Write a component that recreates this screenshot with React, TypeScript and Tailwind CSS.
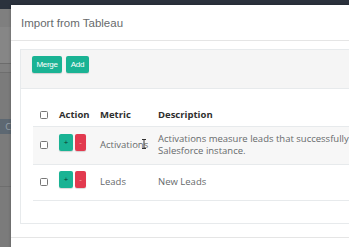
export default function App() {
  const rows = [
    {
      metric: "Activations",
      desc: "Activations measure leads that successfully leave the funnel and are created in the Salesforce instance.",
      striped: true,
    },
    { metric: "Leads", desc: "New Leads", striped: false },
  ];

  return (
    <div className="relative h-[247px] w-[349px] overflow-hidden bg-[#7b7b7b] font-['Open_Sans',sans-serif]">
      {/* dimmed page behind the dialog */}
      <div className="h-[9px] bg-[#2b323d]" />
      <div className="h-[18px] bg-[#7f7f7f]" />
      <div className="h-[37px] border-b border-[#6c6c6c] bg-[#868686]" />
      <div className="h-[9px] border-b border-[#6e6e6e] bg-[#808080]" />
      <div className="mt-[46px] flex h-[15px] w-[11px] items-center justify-end bg-[#5d6872] text-[9px] text-[#98a2aa]">
        C
      </div>
      <div className="mt-[40px] h-[13px] border-b border-[#6e6e6e]" />

      {/* dialog */}
      <div className="absolute left-[11px] top-[5px] w-[560px] bg-white shadow-[0_0_3px_rgba(0,0,0,0.25)]">
        <div className="flex h-[36px] items-center border-b border-[#e5e5e5] pl-[10px] pt-[3px]">
          <h4 className="font-['Liberation_Sans',Arial,sans-serif] text-[11.5px] text-[#676a6c]">
            Import from Tableau
          </h4>
        </div>

        <div className="px-[9px] pb-[13px] pt-[8px]">
          <div className="border border-[#e7eaec]">
            <div className="flex h-[39px] gap-[4px] border-b border-[#e7eaec] bg-[#f5f5f5] pl-[11px] pt-[6px]">
              <button className="h-[17px] w-[30px] rounded-[2px] bg-[#1ab394] font-['Liberation_Sans',Arial,sans-serif] text-[8px] tracking-[-0.3px] text-white shadow-[0_1px_1px_rgba(0,0,0,0.15)]">
                Merge
              </button>
              <button className="h-[17px] w-[23px] rounded-[2px] bg-[#1ab394] font-['Liberation_Sans',Arial,sans-serif] text-[8px] tracking-[-0.3px] text-white shadow-[0_1px_1px_rgba(0,0,0,0.15)]">
                Add
              </button>
            </div>

            <div className="relative pb-[22px] pl-[12px] pt-[15px]">
              <table className="w-[505px] table-fixed border-collapse text-left">
                <colgroup>
                  <col className="w-[19px]" />
                  <col className="w-[41px]" />
                  <col className="w-[58px]" />
                  <col />
                </colgroup>
                <thead>
                  <tr className="h-[22px] text-[9.5px] font-bold text-[#2f2f2f]">
                    <th className="pl-[7px] align-middle">
                      <span className="mt-[1px] block h-[8px] w-[8px] rounded-[1.5px] border border-[#777] bg-white" />
                    </th>
                    <th className="pl-[7px] align-middle">Action</th>
                    <th className="pl-[7px] align-middle">Metric</th>
                    <th className="pl-[7px] align-middle">Description</th>
                  </tr>
                </thead>
                <tbody>
                  {rows.map((r) => (
                    <tr
                      key={r.metric}
                      className={`border-y border-[#e7eaec] text-[9.5px] leading-[12.5px] text-[#676a6c] ${
                        r.striped ? "bg-[#f7f7f7]" : "bg-white"
                      }`}
                    >
                      <td className="py-[6px] pl-[7px] align-middle">
                        <span className="block h-[8px] w-[8px] rounded-[1.5px] border border-[#777] bg-white" />
                      </td>
                      <td className="py-[6px] pl-[7px] align-middle">
                        <div className="flex gap-[2px] pb-[6px]">
                          <span className="flex h-[17px] w-[14px] items-center justify-center rounded-[2px] bg-[#1ab394] text-[8px] leading-none text-[#0d3b2e] shadow-[0_1px_1px_rgba(0,0,0,0.15)]">
                            +
                          </span>
                          <span className="flex h-[17px] w-[11px] items-center justify-center rounded-[2px] bg-[#e23a4f] text-[8px] leading-none text-[#f4b2ba] shadow-[0_1px_1px_rgba(0,0,0,0.15)]">
                            -
                          </span>
                        </div>
                      </td>
                      <td className="py-[6px] pl-[7px] align-middle">{r.metric}</td>
                      <td className="py-[6px] pl-[7px] align-middle">{r.desc}</td>
                    </tr>
                  ))}
                </tbody>
              </table>

              {/* text cursor over "Activations" */}
              <svg className="absolute left-[120px] top-[50px]" width="6" height="10" viewBox="0 0 6 10">
                <path d="M1 0.5h4M3 0.5v9M1 9.5h4" stroke="#333" strokeWidth="1" fill="none" />
              </svg>
            </div>
          </div>
        </div>

        <div className="h-[20px] border-t border-[#e5e5e5]" />
      </div>
    </div>
  );
}
